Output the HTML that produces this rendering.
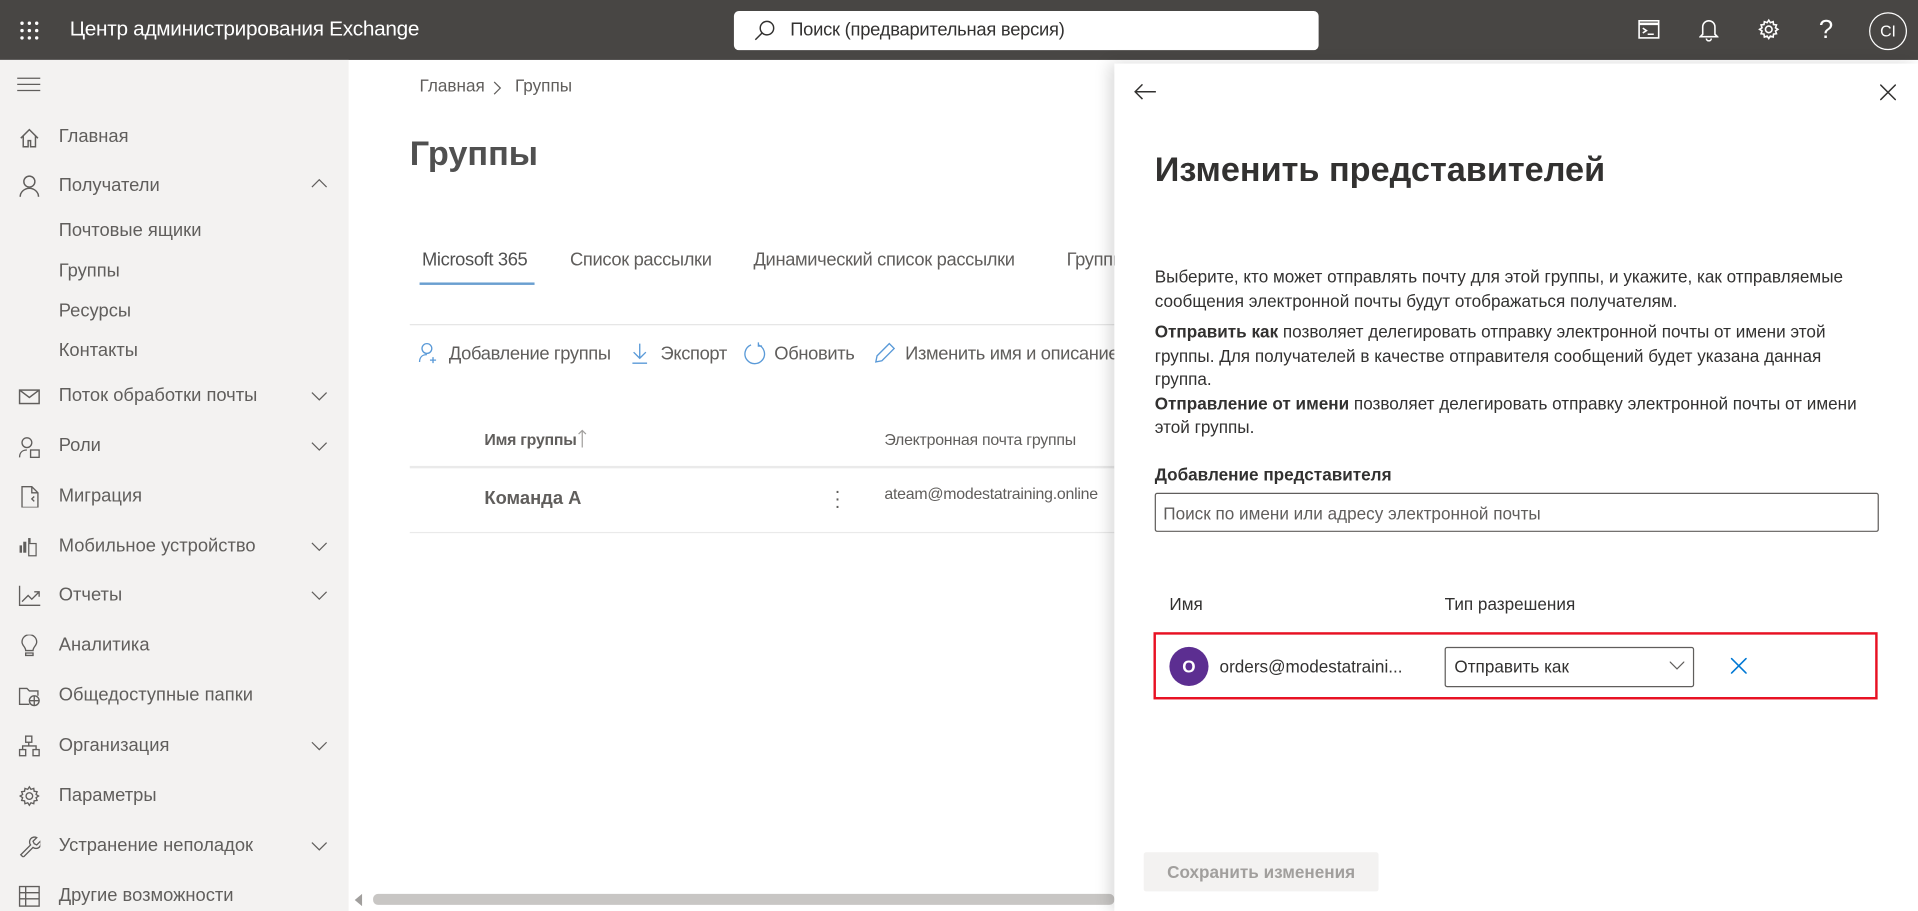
<!DOCTYPE html>
<html><head><meta charset="utf-8"><style>
html,body{margin:0;padding:0;width:1918px;height:911px;overflow:hidden;background:#fff}
#s{position:absolute;left:0;top:0;width:1568px;height:745px;transform:scale(1.22321,1.22282);transform-origin:0 0;font-family:"Liberation Sans",sans-serif;color:#323130}
.a{position:absolute;white-space:nowrap}
#top{position:absolute;left:0;top:0;width:1568px;height:49px;background:#484644}
#side{position:absolute;left:0;top:49px;width:285px;height:696px;background:#f3f2f1}
.ni{position:absolute;left:48px;font-size:15px;color:#605e5c;line-height:20px}
.ic{position:absolute;left:15px;width:18px;height:18px}
.ch{position:absolute;left:254px}
#panel{position:absolute;left:911px;top:52px;width:657px;height:693px;background:#fff;box-shadow:-4px 0 12px rgba(0,0,0,.15)}
.p{font-size:14px;line-height:19.5px;color:#323130}
.tb{font-size:15px;color:#605e5c;letter-spacing:-0.3px}
</style></head><body><div id="s">
<div id="top">
 <svg class="a" style="left:16px;top:17px" width="16" height="16" fill="#fff"><circle cx="2" cy="2" r="1.4"/><circle cx="8" cy="2" r="1.4"/><circle cx="14" cy="2" r="1.4"/><circle cx="2" cy="8" r="1.4"/><circle cx="8" cy="8" r="1.4"/><circle cx="14" cy="8" r="1.4"/><circle cx="2" cy="14" r="1.4"/><circle cx="8" cy="14" r="1.4"/><circle cx="14" cy="14" r="1.4"/></svg>
 <div class="a" style="left:57px;top:14px;font-size:17px;color:#fff;letter-spacing:-0.25px">Центр администрирования Exchange</div>
 <div class="a" style="left:600px;top:9px;width:478px;height:32px;background:#fff;border-radius:4px"></div>
 <svg class="a" style="left:616px;top:16px" width="18" height="18" fill="none" stroke="#323130" stroke-width="1.2"><circle cx="11" cy="7" r="5.5"/><path d="M7 11L1.5 16.5"/></svg>
 <div class="a" style="left:646px;top:16px;font-size:15px;color:#323130;letter-spacing:-0.2px">Поиск (предварительная версия)</div>
 <svg class="a" style="left:1339px;top:16px" width="18" height="16" fill="none" stroke="#fff" stroke-width="1.3"><rect x="1" y="1" width="16" height="14"/><path d="M1 3.5h16" stroke-width="2"/><path d="M4 7l3 2-3 2M8 12h5"/></svg>
 <svg class="a" style="left:1389px;top:15px" width="16" height="19" fill="none" stroke="#fff" stroke-width="1.3"><path d="M3 13V7a5 5 0 0 1 10 0v6l2 2H1z"/><path d="M6 16.5a2 2 0 0 0 4 0"/></svg>
 <svg class="a" style="left:1437px;top:15px" width="18" height="18" fill="none" stroke="#fff" stroke-width="1.3"><circle cx="9" cy="9" r="2.7"/><path d="M9 1.5l1.3 2 2.3-.8.3 2.4 2.4.3-.8 2.3 2 1.3-2 1.3.8 2.3-2.4.3-.3 2.4-2.3-.8L9 16.5l-1.3-2-2.3.8-.3-2.4-2.4-.3.8-2.3-2-1.3 2-1.3-.8-2.3 2.4-.3.3-2.4 2.3.8z"/></svg>
 <div class="a" style="left:1487px;top:13px;font-size:21px;color:#fff">?</div>
 <div class="a" style="left:1528px;top:10px;width:29px;height:29px;border:1px solid #fff;border-radius:50%;color:#fff;font-size:13px;text-align:center;line-height:29px">CI</div>
</div>
<div id="side">
 <svg class="a" style="left:14px;top:14px" width="19" height="12" stroke="#605e5c" stroke-width="1"><path d="M0 1h19M0 6h19M0 11h19"/></svg>
 <svg class="ic" style="top:55px" fill="none" stroke="#605e5c" stroke-width="1.2"><path d="M2 9L9 2l7 7M4 7v9h4v-5h2v5h4V7"/></svg>
 <div class="ni" style="top:53px">Главная</div>
 <svg class="ic" style="top:94px" fill="none" stroke="#605e5c" stroke-width="1.2"><circle cx="9" cy="5.5" r="4.5"/><path d="M1.5 18c0-4 3.5-7 7.5-7s7.5 3 7.5 7"/></svg>
 <div class="ni" style="top:93px">Получатели</div>
 <svg class="ch" style="top:97px" width="14" height="8" fill="none" stroke="#605e5c"><path d="M1 7l6-6 6 6"/></svg>
 <div class="ni" style="top:130px">Почтовые ящики</div>
 <div class="ni" style="top:163px">Группы</div>
 <div class="ni" style="top:196px">Ресурсы</div>
 <div class="ni" style="top:228px">Контакты</div>
 <svg class="ic" style="top:267px" fill="none" stroke="#605e5c" stroke-width="1.2"><rect x="1" y="3" width="16" height="11"/><path d="M1 3l8 6 8-6"/></svg>
 <div class="ni" style="top:265px">Поток обработки почты</div>
 <svg class="ch" style="top:271px" width="14" height="8" fill="none" stroke="#605e5c"><path d="M1 1l6 6 6-6"/></svg>
 <svg class="ic" style="top:308px" fill="none" stroke="#605e5c" stroke-width="1.1"><circle cx="7" cy="5" r="4"/><path d="M1 17c0-4 2.5-6 6-6"/><rect x="10" y="11" width="7" height="6"/></svg>
 <div class="ni" style="top:306px">Роли</div>
 <svg class="ch" style="top:312px" width="14" height="8" fill="none" stroke="#605e5c"><path d="M1 1l6 6 6-6"/></svg>
 <svg class="ic" style="top:348px" fill="none" stroke="#605e5c" stroke-width="1.1"><path d="M11 1H3v17h13V6zM11 1v5h5M13 9l-2 2 2 2"/></svg>
 <div class="ni" style="top:347px">Миграция</div>
 <svg class="ic" style="top:389px" fill="#605e5c"><rect x="1" y="8" width="2" height="6"/><rect x="4" y="5" width="2.5" height="9"/><rect x="8" y="2" width="2" height="4"/><rect x="8.5" y="6.5" width="6" height="10" fill="none" stroke="#605e5c"/></svg>
 <div class="ni" style="top:388px">Мобильное устройство</div>
 <svg class="ch" style="top:394px" width="14" height="8" fill="none" stroke="#605e5c"><path d="M1 1l6 6 6-6"/></svg>
 <svg class="ic" style="top:429px" fill="none" stroke="#605e5c" stroke-width="1.1"><path d="M1 1v16h17M3 14l5-5 3 3 6-6M13 6h4v4"/></svg>
 <div class="ni" style="top:428px">Отчеты</div>
 <svg class="ch" style="top:434px" width="14" height="8" fill="none" stroke="#605e5c"><path d="M1 1l6 6 6-6"/></svg>
 <svg class="ic" style="top:470px" fill="none" stroke="#605e5c" stroke-width="1.1"><path d="M6 13c0-3-3-4-3-7a6 6 0 0 1 12 0c0 3-3 4-3 7zM6 15h6v2H6z"/></svg>
 <div class="ni" style="top:469px">Аналитика</div>
 <svg class="ic" style="top:511px" fill="none" stroke="#605e5c" stroke-width="1.1"><path d="M9 16H1V3h6l2 2h7v4"/><circle cx="13" cy="13" r="4"/><path d="M9 13h8M13 9v8"/></svg>
 <div class="ni" style="top:510px">Общедоступные папки</div>
 <svg class="ic" style="top:552px" fill="none" stroke="#605e5c" stroke-width="1.1"><rect x="6" y="1" width="5" height="5"/><rect x="1" y="12" width="5" height="5"/><rect x="12" y="12" width="5" height="5"/><path d="M8.5 6v3M3.5 12V9h11v3"/></svg>
 <div class="ni" style="top:551px">Организация</div>
 <svg class="ch" style="top:557px" width="14" height="8" fill="none" stroke="#605e5c"><path d="M1 1l6 6 6-6"/></svg>
 <svg class="ic" style="top:593px" fill="none" stroke="#605e5c" stroke-width="1.1"><circle cx="9" cy="9" r="2.7"/><path d="M9 1.5l1.3 2 2.3-.8.3 2.4 2.4.3-.8 2.3 2 1.3-2 1.3.8 2.3-2.4.3-.3 2.4-2.3-.8L9 16.5l-1.3-2-2.3.8-.3-2.4-2.4-.3.8-2.3-2-1.3 2-1.3-.8-2.3 2.4-.3.3-2.4 2.3.8z"/></svg>
 <div class="ni" style="top:592px">Параметры</div>
 <svg class="ic" style="top:634px" fill="none" stroke="#605e5c" stroke-width="1.1"><path d="M2 16l8-8a4 4 0 0 1 5-6l-3 3 1 2 2 1 3-3a4 4 0 0 1-6 5l-8 8z"/></svg>
 <div class="ni" style="top:633px">Устранение неполадок</div>
 <svg class="ch" style="top:639px" width="14" height="8" fill="none" stroke="#605e5c"><path d="M1 1l6 6 6-6"/></svg>
 <svg class="ic" style="top:675px" fill="none" stroke="#605e5c" stroke-width="1.1"><rect x="1" y="1" width="16" height="16"/><path d="M1 6h16M1 11h16M6 1v16"/></svg>
 <div class="ni" style="top:674px">Другие возможности</div>
</div>
<!-- main -->
<div class="a" style="left:343px;top:62px;font-size:14px;color:#605e5c">Главная</div>
<svg class="a" style="left:403px;top:66px" width="8" height="12" fill="none" stroke="#605e5c"><path d="M1 1l5 5-5 5"/></svg>
<div class="a" style="left:421px;top:62px;font-size:14px;color:#605e5c">Группы</div>
<div class="a" style="left:335px;top:110px;font-size:28px;font-weight:bold;color:#505050">Группы</div>
<div class="a tb" style="left:345px;top:204px;color:#505050">Microsoft 365</div>
<div class="a" style="left:343px;top:231px;width:94px;height:2px;background:#6a9fd0"></div>
<div class="a tb" style="left:466px;top:204px">Список рассылки</div>
<div class="a tb" style="left:616px;top:204px">Динамический список рассылки</div>
<div class="a tb" style="left:872px;top:204px">Группы</div>
<div class="a" style="left:335px;top:265px;width:576px;height:1px;background:#e5e5e5"></div>
<svg class="a" style="left:342px;top:280px" width="16" height="18" fill="none" stroke="#5a9ad8" stroke-width="1.1"><circle cx="7" cy="5" r="4"/><path d="M1 16c0-4 2.5-6 6-6M12 12v5M9.5 14.5h5"/></svg>
<div class="a tb" style="left:367px;top:281px">Добавление группы</div>
<svg class="a" style="left:516px;top:280px" width="14" height="18" fill="none" stroke="#5a9ad8" stroke-width="1.1"><path d="M7 1v12M2 8l5 5 5-5M1 17h12"/></svg>
<div class="a tb" style="left:540px;top:281px">Экспорт</div>
<svg class="a" style="left:608px;top:279px" width="18" height="20" fill="none" stroke="#5a9ad8" stroke-width="1.1"><path d="M6 3a8 8 0 1 0 6 0M12 1v3h3"/></svg>
<div class="a tb" style="left:633px;top:281px">Обновить</div>
<svg class="a" style="left:714px;top:279px" width="18" height="19" fill="none" stroke="#5a9ad8" stroke-width="1.1"><path d="M2 17l1-5L13 2l4 4L7 16z"/></svg>
<div class="a tb" style="left:740px;top:281px">Изменить имя и описание</div>
<div class="a" style="left:396px;top:352px;font-size:13px;font-weight:bold;color:#605e5c;letter-spacing:-0.2px">Имя группы</div>
<svg class="a" style="left:472px;top:351px" width="8" height="15" fill="none" stroke="#a19f9d"><path d="M4 15V1M1 4l3-3 3 3"/></svg>
<div class="a" style="left:723px;top:352px;font-size:13px;color:#605e5c;letter-spacing:-0.2px">Электронная почта группы</div>
<div class="a" style="left:335px;top:381px;width:576px;height:2px;background:#eaeaea"></div>
<div class="a" style="left:396px;top:399px;font-size:15px;font-weight:bold;color:#605e5c">Команда А</div>
<div class="a" style="left:682px;top:400px;width:3px;font-size:16px;color:#605e5c;line-height:6px">·<br>·<br>·</div>
<div class="a" style="left:723px;top:396px;font-size:13px;color:#605e5c;letter-spacing:-0.2px">ateam@modestatraining.online</div>
<div class="a" style="left:335px;top:435px;width:576px;height:1px;background:#eaeaea"></div>
<svg class="a" style="left:289px;top:731px" width="8" height="10" fill="#a19f9d"><path d="M7 0v10L1 5z"/></svg>
<div class="a" style="left:305px;top:731px;width:606px;height:9px;background:#c8c6c4;border-radius:4px"></div>
<!-- panel -->
<div id="panel">
 <svg class="a" style="left:16px;top:16px" width="18" height="14" fill="none" stroke="#323130" stroke-width="1.2"><path d="M18 7H1M7 1L1 7l6 6"/></svg>
 <svg class="a" style="left:626px;top:17px" width="13" height="13" fill="none" stroke="#323130" stroke-width="1.2"><path d="M0 0l13 13M13 0L0 13"/></svg>
 <div class="a" style="left:33px;top:71px;font-size:28px;font-weight:bold;color:#323130">Изменить представителей</div>
 <div class="a p" style="left:33px;top:165px;width:590px;white-space:normal">Выберите, кто может отправлять почту для этой группы, и укажите, как отправляемые сообщения электронной почты будут отображаться получателям.</div>
 <div class="a p" style="left:33px;top:210px;width:590px;white-space:normal"><b>Отправить как</b> позволяет делегировать отправку электронной почты от имени этой группы. Для получателей в качестве отправителя сообщений будет указана данная группа.<br><b>Отправление от имени</b> позволяет делегировать отправку электронной почты от имени этой группы.</div>
 <div class="a" style="left:33px;top:328px;font-size:14px;font-weight:bold">Добавление представителя</div>
 <div class="a" style="left:33px;top:351px;width:590px;height:30px;border:1px solid #605e5c;border-radius:2px"></div>
 <div class="a" style="left:40px;top:360px;font-size:14px;color:#605e5c">Поиск по имени или адресу электронной почты</div>
 <div class="a" style="left:45px;top:434px;font-size:14px">Имя</div>
 <div class="a" style="left:270px;top:434px;font-size:14px">Тип разрешения</div>
 <div class="a" style="left:32px;top:465px;width:588px;height:51px;border:2px solid #e81123"></div>
 <div class="a" style="left:45px;top:477px;width:32px;height:32px;border-radius:50%;background:#5c2e91;color:#fff;font-size:14px;font-weight:bold;text-align:center;line-height:32px">O</div>
 <div class="a" style="left:86px;top:485px;font-size:14px">orders@modestatraini...</div>
 <div class="a" style="left:270px;top:477px;width:202px;height:31px;border:1px solid #605e5c;border-radius:2px"></div>
 <div class="a" style="left:278px;top:485px;font-size:14px">Отправить как</div>
 <svg class="a" style="left:454px;top:489px" width="12" height="7" fill="none" stroke="#605e5c"><path d="M0 0l6 6 6-6"/></svg>
 <svg class="a" style="left:504px;top:486px" width="13" height="13" fill="none" stroke="#0078d4" stroke-width="1.3"><path d="M0 0l13 13M13 0L0 13"/></svg>
 <div class="a" style="left:24px;top:645px;width:192px;height:32px;background:#f3f2f1;border-radius:2px;color:#a19f9d;font-size:14px;font-weight:bold;text-align:center;line-height:32px">Сохранить изменения</div>
</div>
</div></body></html>
